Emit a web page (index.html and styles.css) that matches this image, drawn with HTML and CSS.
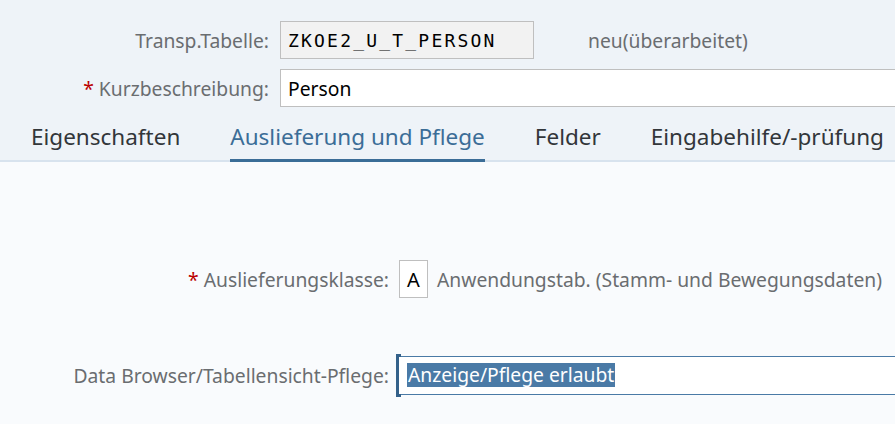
FILE: index.html
```html
<!DOCTYPE html>
<html lang="de">
<head>
<meta charset="utf-8">
<title>Transp.Tabelle</title>
<link rel="stylesheet" href="styles.css">
</head>
<body>
<div class="header">
  <div class="form-row">
    <label class="label head-label">Transp.Tabelle:</label>
    <div class="field field-ro mono">ZKOE2_U_T_PERSON</div>
    <span class="status">neu(überarbeitet)</span>
  </div>
  <div class="form-row">
    <label class="label head-label"><span class="req">*</span> Kurzbeschreibung:</label>
    <div class="field field-wide">Person</div>
  </div>
  <div class="tabs">
    <div class="tab">Eigenschaften</div>
    <div class="tab active">Auslieferung und Pflege</div>
    <div class="tab">Felder</div>
    <div class="tab">Eingabehilfe/-prüfung</div>
  </div>
</div>
<div class="content">
  <div class="form-row row-a">
    <label class="label body-label"><span class="req">*</span> Auslieferungsklasse:</label>
    <div class="field field-char">A</div>
    <span class="desc">Anwendungstab. (Stamm- und Bewegungsdaten)</span>
  </div>
  <div class="form-row row-b">
    <label class="label body-label">Data Browser/Tabellensicht-Pflege:</label>
    <div class="field field-focus"><span class="sel">Anzeige/Pflege erlaubt</span></div>
  </div>
</div>
</body>
</html>
```
FILE: styles.css
```css
html, body {
  margin: 0;
  padding: 0;
}
body {
  width: 895px;
  height: 424px;
  overflow: hidden;
  font-family: "Noto Sans", Roboto, sans-serif;
  background: #f9fbfd;
  color: #32363a;
}
.header {
  background: #eef3f8;
  padding-top: 21px;
}
.form-row {
  display: flex;
  align-items: center;
  height: 38px;
}
.form-row + .form-row {
  margin-top: 10px;
}
.label {
  color: #6a6d70;
  font-size: 19.3px;
  text-align: right;
  flex: none;
  margin-right: 10px;
  white-space: nowrap;
}
.head-label {
  width: 269px;
  margin-right: 11px;
}
.body-label {
  width: 389px;
}
.req {
  color: #bb0000;
}
.field {
  box-sizing: border-box;
  height: 38px;
  border: 1px solid #bfbfbf;
  background: #ffffff;
  display: flex;
  align-items: center;
  padding-left: 7px;
  font-size: 19.3px;
  color: #000000;
  flex: none;
}
.field-ro {
  width: 254px;
  background: #f2f2f2;
}
.mono {
  font-family: "DejaVu Sans Mono", monospace;
  font-size: 18px;
  letter-spacing: 2.2px;
}
.status {
  margin-left: 54px;
  font-size: 19.3px;
  color: #6a6d70;
}
.field-wide {
  flex: 1;
  border-right: none;
}
.tabs {
  display: flex;
  gap: 50px;
  padding-left: 31px;
  margin-top: 8px;
  border-bottom: 2px solid #d8e3ee;
  height: 45px;
}
.tab {
  font-size: 22.5px;
  color: #32363a;
  white-space: nowrap;
  border-bottom: 3px solid transparent;
  margin-bottom: -2px;
  line-height: 44px;
  height: 44px;
}
.tab.active {
  color: #3b6d97;
  border-bottom-color: #3b6d97;
}
.content {
  padding-top: 98px;
}
.row-b {
  margin-top: 58px !important;
}
.field-char {
  width: 29px;
  padding: 0;
  justify-content: center;
  font-size: 20px;
}
.desc {
  margin-left: 9px;
  font-size: 19.3px;
  color: #6a6d70;
  white-space: nowrap;
}
.field-focus {
  flex: 1;
  border: none;
  border-top: 1px solid #4a7aa6;
  border-bottom: 1px solid #4a7aa6;
  position: relative;
  padding-left: 8px;
  height: 39px;
}
.field-focus::before {
  content: "";
  position: absolute;
  left: -3px;
  top: -3px;
  bottom: -3px;
  width: 5px;
  border: 3px solid #34618a;
  border-right: none;
  box-sizing: border-box;
}
.sel {
  background: #4a7aa6;
  color: #ffffff;
  padding: 0 1px;
  line-height: 24px;
  white-space: nowrap;
}
```
